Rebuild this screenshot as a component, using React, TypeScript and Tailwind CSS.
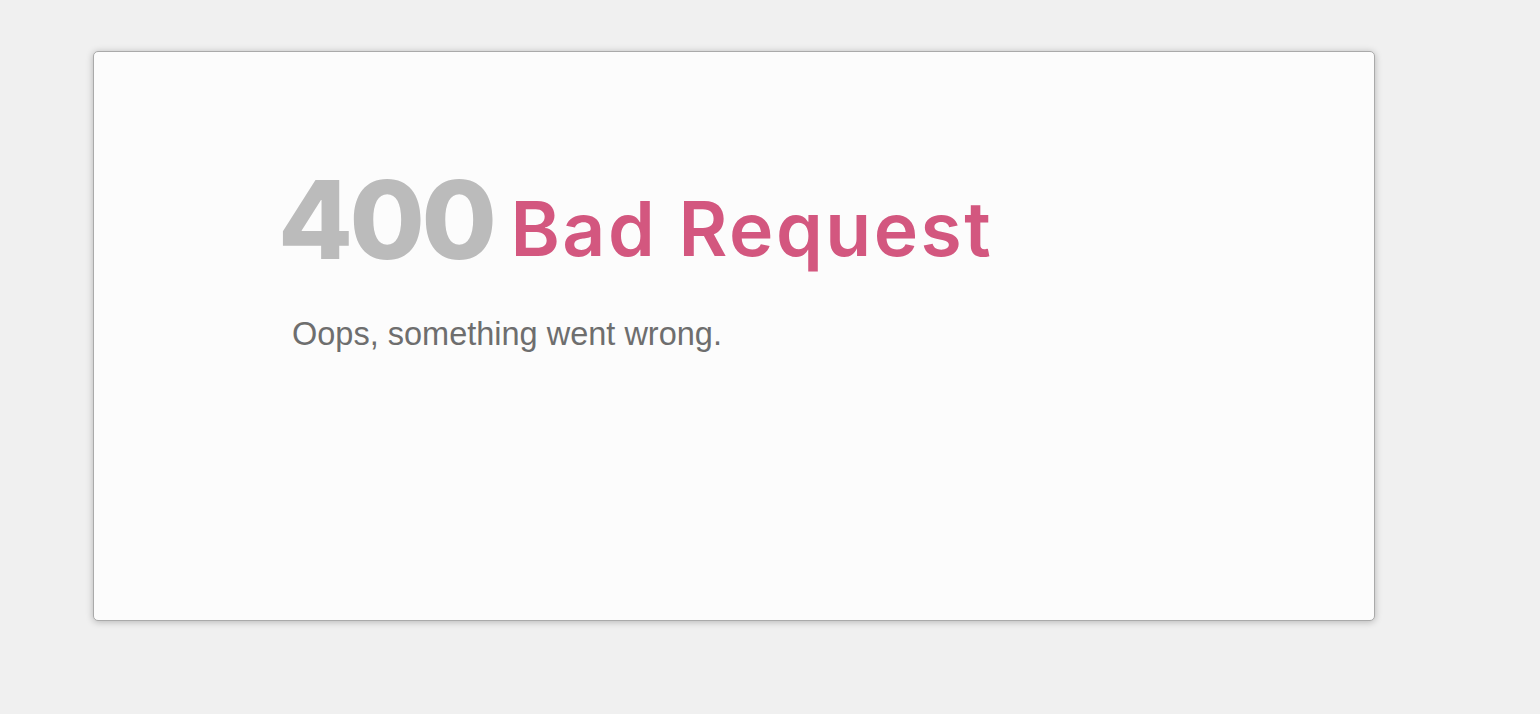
/**
 * Error page: a single card with the status code, its title and a short message.
 */
export default function App() {
  return (
    <div className="min-h-[714px] w-full bg-[#f0f0f0] pt-[51px] pl-[93px]">
      <div className="h-[570px] w-[1282px] rounded-[5px] border border-[#aaaaaa] bg-[#fcfcfc] pt-[113px] pl-[184px] shadow-[0_1px_7px_rgba(0,0,0,0.25)]">
        <div className="flex items-end gap-[17px] font-['Inter',sans-serif]">
          <span className="text-[109px] leading-none font-extrabold tracking-[-3.5px] text-[#bbbbbb]">400</span>
          <span className="mb-[8px] text-[75px] leading-none font-semibold tracking-[2.5px] text-[#d3577f]">Bad Request</span>
        </div>
        <p className="mt-[44px] ml-[14px] font-['Liberation_Sans',Arial,sans-serif] text-[32.5px] leading-none text-[#6e6e6e]">
          Oops, something went wrong.
        </p>
      </div>
    </div>
  );
}
